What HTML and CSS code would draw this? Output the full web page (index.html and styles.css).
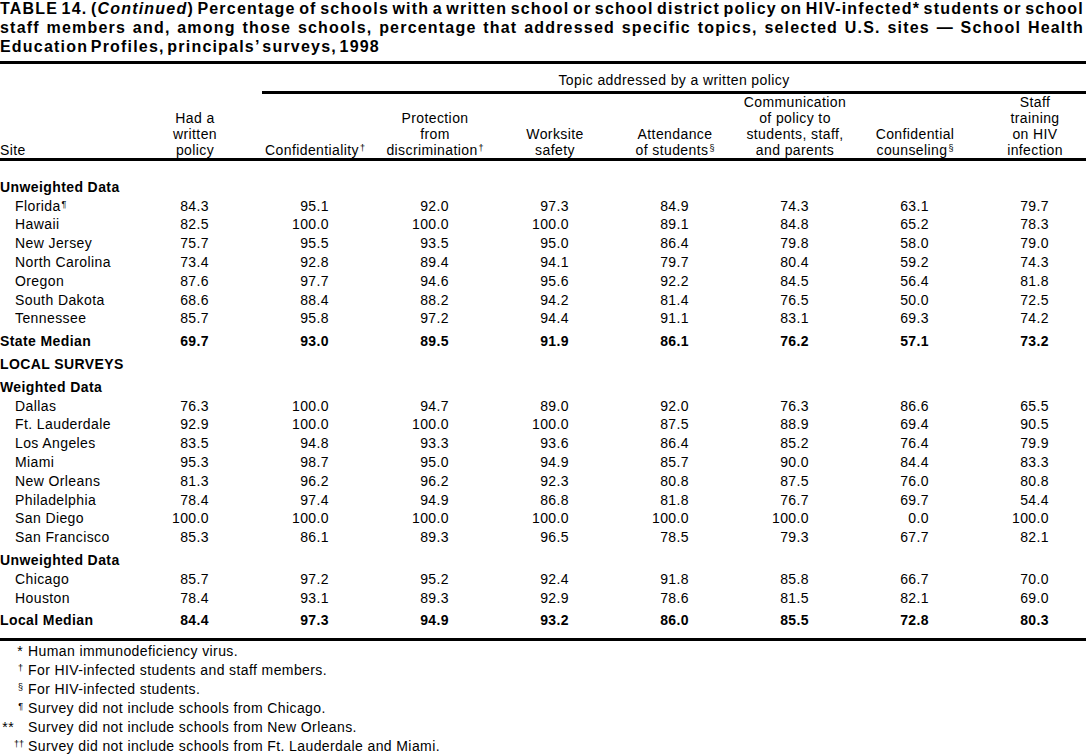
FILE: index.html
```html
<!DOCTYPE html>
<html lang="en">
<head>
<meta charset="utf-8">
<title>Table 14 (Continued)</title>
<link rel="stylesheet" href="styles.css">
</head>
<body>
<div class="page">
  <h1 class="title">
    <span class="title-line just">TABLE 14. (<em>Continued</em>) Percentage of schools with a written school or school district policy on HIV-infected* students or school</span>
    <span class="title-line just">staff members and, among those schools, percentage that addressed specific topics, selected U.S. sites — School Health</span>
    <span class="title-line">Education Profiles, principals’ surveys, 1998</span>
  </h1>

  <table class="data">
    <colgroup>
      <col class="c-site">
      <col class="c-num"><col class="c-num"><col class="c-num"><col class="c-num">
      <col class="c-num"><col class="c-num"><col class="c-num"><col class="c-end">
    </colgroup>
    <thead>
      <tr class="topic-row">
        <th colspan="2"></th>
        <th colspan="7"><div class="topic">Topic addressed by a written policy</div></th>
      </tr>
      <tr class="col-head">
        <th class="site">Site</th>
        <th>Had a<br>written<br>policy</th>
        <th>Confidentiality<span class="sym">†</span></th>
        <th>Protection<br>from<br>discrimination<span class="sym">†</span></th>
        <th>Worksite<br>safety</th>
        <th>Attendance<br>of students<span class="sym">§</span></th>
        <th>Communication<br>of policy to<br>students, staff,<br>and parents</th>
        <th>Confidential<br>counseling<span class="sym">§</span></th>
        <th class="end">Staff<br>training<br>on HIV<br>infection</th>
      </tr>
    </thead>
    <tbody>
      <tr class="sec first"><th colspan="9">Unweighted Data</th></tr>
      <tr><th>Florida<span class="sym">¶</span></th><td>84.3</td><td>95.1</td><td>92.0</td><td>97.3</td><td>84.9</td><td>74.3</td><td>63.1</td><td>79.7</td></tr>
      <tr><th>Hawaii</th><td>82.5</td><td>100.0</td><td>100.0</td><td>100.0</td><td>89.1</td><td>84.8</td><td>65.2</td><td>78.3</td></tr>
      <tr><th>New Jersey</th><td>75.7</td><td>95.5</td><td>93.5</td><td>95.0</td><td>86.4</td><td>79.8</td><td>58.0</td><td>79.0</td></tr>
      <tr><th>North Carolina</th><td>73.4</td><td>92.8</td><td>89.4</td><td>94.1</td><td>79.7</td><td>80.4</td><td>59.2</td><td>74.3</td></tr>
      <tr><th>Oregon</th><td>87.6</td><td>97.7</td><td>94.6</td><td>95.6</td><td>92.2</td><td>84.5</td><td>56.4</td><td>81.8</td></tr>
      <tr><th>South Dakota</th><td>68.6</td><td>88.4</td><td>88.2</td><td>94.2</td><td>81.4</td><td>76.5</td><td>50.0</td><td>72.5</td></tr>
      <tr><th>Tennessee</th><td>85.7</td><td>95.8</td><td>97.2</td><td>94.4</td><td>91.1</td><td>83.1</td><td>69.3</td><td>74.2</td></tr>
      <tr class="median"><th>State Median</th><td>69.7</td><td>93.0</td><td>89.5</td><td>91.9</td><td>86.1</td><td>76.2</td><td>57.1</td><td>73.2</td></tr>
      <tr class="sec"><th colspan="9">LOCAL SURVEYS</th></tr>
      <tr class="sec"><th colspan="9">Weighted Data</th></tr>
      <tr><th>Dallas</th><td>76.3</td><td>100.0</td><td>94.7</td><td>89.0</td><td>92.0</td><td>76.3</td><td>86.6</td><td>65.5</td></tr>
      <tr><th>Ft. Lauderdale</th><td>92.9</td><td>100.0</td><td>100.0</td><td>100.0</td><td>87.5</td><td>88.9</td><td>69.4</td><td>90.5</td></tr>
      <tr><th>Los Angeles</th><td>83.5</td><td>94.8</td><td>93.3</td><td>93.6</td><td>86.4</td><td>85.2</td><td>76.4</td><td>79.9</td></tr>
      <tr><th>Miami</th><td>95.3</td><td>98.7</td><td>95.0</td><td>94.9</td><td>85.7</td><td>90.0</td><td>84.4</td><td>83.3</td></tr>
      <tr><th>New Orleans</th><td>81.3</td><td>96.2</td><td>96.2</td><td>92.3</td><td>80.8</td><td>87.5</td><td>76.0</td><td>80.8</td></tr>
      <tr><th>Philadelphia</th><td>78.4</td><td>97.4</td><td>94.9</td><td>86.8</td><td>81.8</td><td>76.7</td><td>69.7</td><td>54.4</td></tr>
      <tr><th>San Diego</th><td>100.0</td><td>100.0</td><td>100.0</td><td>100.0</td><td>100.0</td><td>100.0</td><td>0.0</td><td>100.0</td></tr>
      <tr><th>San Francisco</th><td>85.3</td><td>86.1</td><td>89.3</td><td>96.5</td><td>78.5</td><td>79.3</td><td>67.7</td><td>82.1</td></tr>
      <tr class="sec"><th colspan="9">Unweighted Data</th></tr>
      <tr><th>Chicago</th><td>85.7</td><td>97.2</td><td>95.2</td><td>92.4</td><td>91.8</td><td>85.8</td><td>66.7</td><td>70.0</td></tr>
      <tr><th>Houston</th><td>78.4</td><td>93.1</td><td>89.3</td><td>92.9</td><td>78.6</td><td>81.5</td><td>82.1</td><td>69.0</td></tr>
      <tr class="median end"><th>Local Median</th><td>84.4</td><td>97.3</td><td>94.9</td><td>93.2</td><td>86.0</td><td>85.5</td><td>72.8</td><td>80.3</td></tr>
    </tbody>
  </table>

  <div class="notes">
    <div class="note"><span class="mark">*</span><span class="text">Human immunodeficiency virus.</span></div>
    <div class="note"><span class="mark"><span class="sym">†</span></span><span class="text">For HIV-infected students and staff members.</span></div>
    <div class="note"><span class="mark"><span class="sym">§</span></span><span class="text">For HIV-infected students.</span></div>
    <div class="note"><span class="mark"><span class="sym">¶</span></span><span class="text">Survey did not include schools from Chicago.</span></div>
    <div class="note"><span class="mark mark-dbl">**</span><span class="text">Survey did not include schools from New Orleans.</span></div>
    <div class="note"><span class="mark"><span class="sym sym-wide">††</span></span><span class="text">Survey did not include schools from Ft. Lauderdale and Miami.</span></div>
  </div>
</div>
</body>
</html>
```

FILE: styles.css
```css
html, body {
  margin: 0;
  padding: 0;
  background: #fff;
}

body {
  font-family: "Liberation Sans", Arial, sans-serif;
  color: #000;
}

.page {
  width: 1086px;
  overflow: hidden;
}

/* ---------- Title ---------- */
.title {
  margin: 0;
  padding: 0 2px 4.4px 0;
  border-bottom: 3px solid #000;
  font-size: 16px;
  font-weight: 700;
  line-height: 18.8px;
  letter-spacing: 1.2px;
  word-spacing: -3px;
}

.title-line {
  display: block;
}

.title-line.just {
  text-align: justify;
  text-align-last: justify;
}

.title em {
  font-style: italic;
}

/* ---------- Table ---------- */
.data {
  width: 1086px;
  table-layout: fixed;
  border-collapse: separate;
  border-spacing: 0;
  font-size: 14px;
  letter-spacing: 0.4px;
}

.c-site { width: 135px; }
.c-num { width: 120px; }
.c-end { width: 111px; }

.data th,
.data td {
  padding: 0;
  font-weight: 400;
}

.topic-row th {
  padding-top: 8px;
}

.topic {
  margin-left: 7px;
  padding-bottom: 3px;
  border-bottom: 3px solid #000;
  text-align: center;
  line-height: 16px;
}

.col-head th {
  vertical-align: bottom;
  line-height: 16px;
  text-align: center;
  white-space: nowrap;
  border-bottom: 3px solid #000;
}

.col-head th.site {
  text-align: left;
}

.col-head th.end {
  padding-left: 9px;
}

.data tbody th {
  text-align: left;
  padding-left: 15px;
  line-height: 18.8px;
  white-space: nowrap;
}

.data tbody td {
  text-align: right;
  padding-right: 46px;
  line-height: 18.8px;
  white-space: nowrap;
}

.data tbody td:last-child {
  padding-right: 37px;
}

.data tbody .sec th {
  padding-left: 0;
  padding-top: 4px;
  font-weight: 700;
}

.data tbody .sec.first th {
  padding-top: 17px;
}

.data tbody .median th,
.data tbody .median td {
  font-weight: 700;
  padding-top: 4px;
}

.data tbody .median th {
  padding-left: 0;
}

.data tbody .median.end th,
.data tbody .median.end td {
  padding-bottom: 7.6px;
  border-bottom: 3px solid #000;
}

.sym {
  font-size: 9px;
  line-height: 1;
  vertical-align: 4px;
  letter-spacing: 0;
  margin-left: 1px;
}

/* ---------- Footnotes ---------- */
.notes {
  padding-top: 1.5px;
  font-size: 14px;
  letter-spacing: 0.4px;
  line-height: 19px;
}

.note {
  display: flex;
}

.mark {
  width: 23px;
  flex: none;
  text-align: right;
}

.mark-dbl {
  padding-right: 9px;
  box-sizing: border-box;
}

.sym-wide {
  margin-right: -1px;
}

.text {
  padding-left: 5px;
}
```
